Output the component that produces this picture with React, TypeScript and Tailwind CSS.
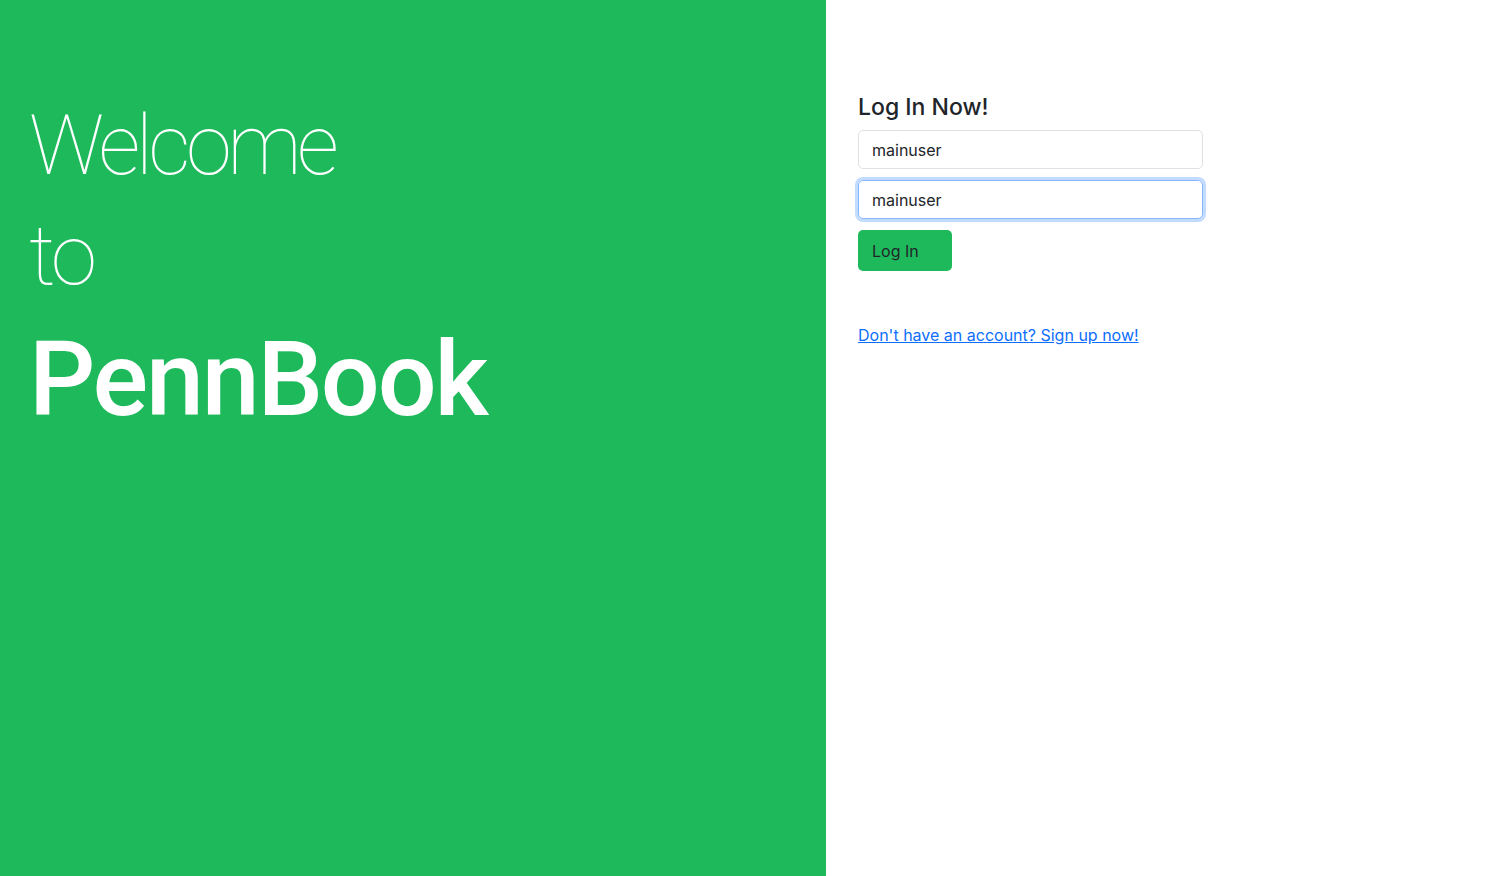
import React from "react";

export default function App() {
  return (
    <div className="flex h-[876px] w-full overflow-hidden bg-white" style={{ fontFamily: "Inter, 'Liberation Sans', sans-serif" }}>
      <div className="w-[826px] shrink-0 bg-[#1db95b] pl-[29px] pt-[96px] text-white">
        <div className="font-['Roboto',sans-serif] text-[83px] font-thin leading-[100px] tracking-[-4.5px]">Welcome</div>
        <div className="mt-[10px] font-['Roboto',sans-serif] text-[84px] font-thin leading-[100px] tracking-[-4px]">to</div>
        <div className="mt-[14px] font-['Roboto',sans-serif] text-[104px] font-medium leading-[120px] tracking-[-2.2px]">PennBook</div>
      </div>
      <div className="flex-1 pl-[32px] pt-[91px]">
        <h3 className="text-[23px] font-medium leading-[32px] text-[#212529]">Log In Now!</h3>
        <div className="mt-[7px] flex w-[345px] flex-col">
          <input
            readOnly
            value="mainuser"
            className="h-[39px] w-full rounded-[5px] border border-[#dee2e6] px-[13px] text-[16px] text-[#212529] outline-none"
          />
          <input
            readOnly
            value="mainuser"
            className="mt-[11px] h-[39px] w-full rounded-[5px] border border-[#86b7fe] px-[13px] text-[16px] text-[#212529] shadow-[0_0_0_3px_rgba(13,110,253,0.25)] outline-none"
          />
          <button className="mt-[11px] h-[41px] w-[94px] rounded-[5px] bg-[#1db95b] pl-[14px] text-left text-[16px] text-[#212529]">
            Log In
          </button>
        </div>
        <a href="#" className="mt-[52px] block text-[16px] leading-[24px] text-[#0d6efd] underline">
          Don't have an account? Sign up now!
        </a>
      </div>
    </div>
  );
}
